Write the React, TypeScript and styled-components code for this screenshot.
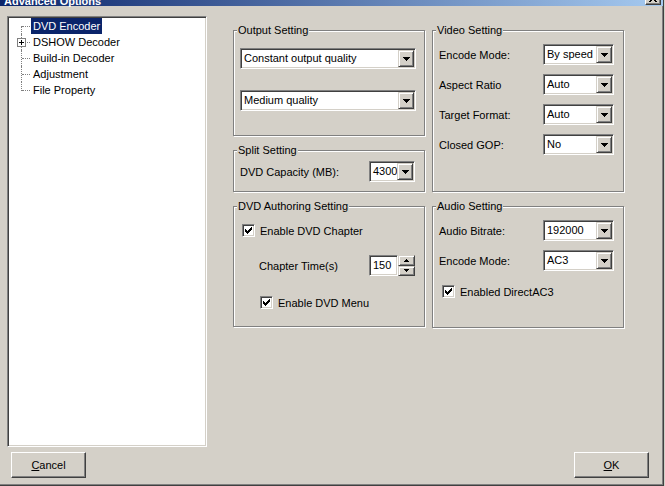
import React from "react"
import styled, { createGlobalStyle } from "styled-components"

const FONT = `"Liberation Sans", Arial, sans-serif`

const GlobalStyle = createGlobalStyle`
  html, body {
    margin: 0;
    padding: 0;
    background: #d4d0c8;
  }
  * {
    box-sizing: border-box;
  }
  body {
    font-family: ${FONT};
    font-size: 11px;
    color: #000;
  }
`

const Window = styled.div`
  width: 664px;
  height: 486px;
  overflow: hidden;
  background: #d4d0c8;
  display: flex;
  flex-direction: column;
  border-right: 1px solid #404040;
  border-bottom: 1px solid #404040;
  box-shadow: inset -1px -1px 0 #808080;
`

const TitleBar = styled.div`
  flex: none;
  height: 18px;
  margin-top: -12px;
  padding: 0 2px 0 4px;
  display: flex;
  align-items: flex-start;
  justify-content: space-between;
  background: linear-gradient(to right, #0a246a, #a6caf0);
`

const Title = styled.span`
  color: #fff;
  font-weight: bold;
  font-size: 11px;
  line-height: 11px;
  padding-top: 8px;
`

const CloseButton = styled.div`
  width: 16px;
  height: 14px;
  margin-top: 3px;
  background: #d4d0c8;
  border: 1px solid;
  border-color: #fff #404040 #404040 #fff;
  box-shadow: inset -1px -1px 0 #808080;
  display: flex;
  align-items: center;
  justify-content: center;
`

const Body = styled.div`
  flex: 1;
  display: flex;
  flex-direction: column;
  padding: 10px 0 0 7px;
`

const Main = styled.div`
  display: flex;
  align-items: flex-start;
  height: 431px;
`

const TreePanel = styled.div`
  flex: none;
  width: 200px;
  height: 431px;
  background: #fff;
  border: 1px solid;
  border-color: #808080 #fff #fff #808080;
  box-shadow: inset 1px 1px 0 #404040, inset -1px -1px 0 #d4d0c8;
  padding: 1px;
`

const TreeList = styled.ul`
  list-style: none;
  margin: 0;
  padding: 0;
`

const TreeItem = styled.li`
  display: flex;
  align-items: center;
  height: 16px;
`

const Gutter = styled.span<{ $first?: boolean; $last?: boolean }>`
  position: relative;
  flex: none;
  width: 22px;
  height: 100%;

  &::before {
    content: "";
    position: absolute;
    left: 12px;
    top: ${({ $first }) => ($first ? "8px" : "0")};
    bottom: ${({ $last }) => ($last ? "7px" : "0")};
    border-left: 1px dotted #808080;
  }

  &::after {
    content: "";
    position: absolute;
    left: 13px;
    top: 8px;
    width: 8px;
    border-top: 1px dotted #808080;
  }
`

const Expander = styled.span`
  position: absolute;
  left: 8px;
  top: 4px;
  width: 9px;
  height: 9px;
  z-index: 1;
  background: #fff;
  border: 1px solid #808080;
  display: flex;
  align-items: center;
  justify-content: center;
`

const NodeLabel = styled.span<{ $selected?: boolean }>`
  height: 16px;
  line-height: 16px;
  padding: 0 2px;
  white-space: nowrap;
  background: ${({ $selected }) => ($selected ? "#0a246a" : "transparent")};
  color: ${({ $selected }) => ($selected ? "#fff" : "#000")};
`

const Content = styled.div`
  display: flex;
  gap: 7px;
  margin: 14px 0 0 26px;
`

const Column = styled.div`
  width: 192px;
  display: flex;
  flex-direction: column;
  gap: 14px;
`

const Group = styled.div<{ $h: number; $pt: number; $pl?: number }>`
  position: relative;
  height: ${({ $h }) => $h}px;
  border: 1px solid #808080;
  box-shadow: inset 1px 1px 0 #fff, 1px 1px 0 #fff;
  padding: ${({ $pt, $pl = 6 }) => `${$pt}px 9px 0 ${$pl}px`};
  display: flex;
  flex-direction: column;
`

const Legend = styled.span`
  position: absolute;
  top: -7px;
  left: 3px;
  padding: 0 1px;
  line-height: 13px;
  background: #d4d0c8;
  white-space: nowrap;
`

const Stack = styled.div<{ $gap: number }>`
  display: flex;
  flex-direction: column;
  gap: ${({ $gap }) => $gap}px;
`

const FieldRow = styled.div<{ $mt?: number; $indent?: number }>`
  display: flex;
  align-items: center;
  justify-content: space-between;
  height: 21px;
  margin-top: ${({ $mt = 0 }) => $mt}px;
  padding-left: ${({ $indent = 0 }) => $indent}px;
`

const FieldLabel = styled.span`
  white-space: nowrap;
`

const Sunken = styled.div`
  background: #fff;
  border: 1px solid;
  border-color: #808080 #fff #fff #808080;
  box-shadow: inset 1px 1px 0 #404040, inset -1px -1px 0 #d4d0c8;
`

const ComboBox = styled(Sunken)<{ $w: number }>`
  width: ${({ $w }) => $w}px;
  height: 21px;
  padding: 1px;
  display: flex;
  align-items: stretch;
  flex: none;
`

const ComboText = styled.span`
  flex: 1;
  padding-left: 2px;
  line-height: 17px;
  white-space: nowrap;
  overflow: hidden;
`

const Raised = styled.div`
  background: #d4d0c8;
  border: 1px solid;
  border-color: #d4d0c8 #404040 #404040 #d4d0c8;
  box-shadow: inset 1px 1px 0 #fff, inset -1px -1px 0 #808080;
  display: flex;
  align-items: center;
  justify-content: center;
`

const DropButton = styled(Raised)`
  width: 16px;
  flex: none;
`

const SpinBox = styled.div`
  display: flex;
  height: 21px;
`

const SpinField = styled(Sunken)`
  width: 29px;
  height: 21px;
  padding: 0 0 0 3px;
  line-height: 19px;
`

const SpinColumn = styled.div`
  width: 17px;
  display: flex;
  flex-direction: column;
`

const SpinButton = styled(Raised)`
  flex: 1;
`

const CheckRow = styled.label<{ $mt?: number; $indent?: number }>`
  display: flex;
  align-items: center;
  gap: 5px;
  height: 13px;
  margin-top: ${({ $mt = 0 }) => $mt}px;
  margin-left: ${({ $indent = 0 }) => $indent}px;
  white-space: nowrap;
`

const CheckBox = styled(Sunken)`
  width: 13px;
  height: 13px;
  flex: none;
  padding: 2px 0 0 2px;
  display: flex;
`

const Footer = styled.div`
  display: flex;
  justify-content: space-between;
  margin-top: 5px;
  padding: 0 14px 0 4px;
`

const PushButton = styled(Raised)`
  width: 75px;
  height: 26px;
  border-color: #fff #404040 #404040 #fff;
  box-shadow: inset -1px -1px 0 #808080;
`

const Mnemonic = styled.span`
  text-decoration: underline;
`

const DownArrow = () => (
  <svg width="7" height="4" shapeRendering="crispEdges">
    <path d="M0 0h7v1H0z M1 1h5v1H1z M2 2h3v1H2z M3 3h1v1H3z" fill="#000" />
  </svg>
)

const SmallArrow = ({ up }: { up?: boolean }) => (
  <svg width="5" height="3" shapeRendering="crispEdges" style={up ? undefined : { transform: "scaleY(-1)" }}>
    <path d="M2 0h1v1H2z M1 1h3v1H1z M0 2h5v1H0z" fill="#000" />
  </svg>
)

const CheckMark = () => (
  <svg width="7" height="7" shapeRendering="crispEdges">
    <path
      d="M6 0h1v1H6z M5 1h2v1H5z M0 2h1v1H0z M4 2h3v1H4z M0 3h2v1H0z M3 3h3v1H3z M0 4h5v1H0z M1 5h3v1H1z M2 6h1v1H2z"
      fill="#000"
    />
  </svg>
)

const Combo = ({ value, w }: { value: string; w: number }) => (
  <ComboBox $w={w}>
    <ComboText>{value}</ComboText>
    <DropButton>
      <DownArrow />
    </DropButton>
  </ComboBox>
)

const Check = ({ label, mt, indent }: { label: string; mt?: number; indent?: number }) => (
  <CheckRow $mt={mt} $indent={indent}>
    <CheckBox>
      <CheckMark />
    </CheckBox>
    {label}
  </CheckRow>
)

const treeNodes = [
  { label: "DVD Encoder", selected: true },
  { label: "DSHOW Decoder", expandable: true },
  { label: "Build-in Decoder" },
  { label: "Adjustment" },
  { label: "File Property" },
]

const videoRows = [
  ["Encode Mode:", "By speed"],
  ["Aspect Ratio", "Auto"],
  ["Target Format:", "Auto"],
  ["Closed GOP:", "No"],
]

export default function App() {
  return (
    <>
      <GlobalStyle />
      <Window>
        <TitleBar>
          <Title>Advanced Options</Title>
          <CloseButton>
            <svg width="8" height="7" shapeRendering="crispEdges">
              <path d="M0 0h2v1H0z M6 0h2v1H6z M1 1h2v1H1z M5 1h2v1H5z M2 2h4v1H2z M3 3h2v1H3z M2 4h4v1H2z M1 5h2v1H1z M5 5h2v1H5z M0 6h2v1H0z M6 6h2v1H6z" fill="#000" />
            </svg>
          </CloseButton>
        </TitleBar>

        <Body>
          <Main>
            <TreePanel>
              <TreeList>
                {treeNodes.map((node, i) => (
                  <TreeItem key={node.label}>
                    <Gutter $first={i === 0} $last={i === treeNodes.length - 1}>
                      {node.expandable && (
                        <Expander>
                          <svg width="5" height="5" shapeRendering="crispEdges">
                            <path d="M0 2h5v1H0z M2 0h1v5H2z" fill="#000" />
                          </svg>
                        </Expander>
                      )}
                    </Gutter>
                    <NodeLabel $selected={node.selected}>{node.label}</NodeLabel>
                  </TreeItem>
                ))}
              </TreeList>
            </TreePanel>

            <Content>
              <Column>
                <Group $h={106} $pt={17}>
                  <Legend>Output Setting</Legend>
                  <Stack $gap={21}>
                    <Combo value="Constant output quality" w={176} />
                    <Combo value="Medium quality" w={176} />
                  </Stack>
                </Group>

                <Group $h={42} $pt={10}>
                  <Legend>Split Setting</Legend>
                  <FieldRow>
                    <FieldLabel>DVD Capacity (MB):</FieldLabel>
                    <Combo value="4300" w={46} />
                  </FieldRow>
                </Group>

                <Group $h={121} $pt={17} $pl={8}>
                  <Legend>DVD Authoring Setting</Legend>
                  <Check label="Enable DVD Chapter" />
                  <FieldRow $mt={18} $indent={17}>
                    <FieldLabel>Chapter Time(s)</FieldLabel>
                    <SpinBox>
                      <SpinField>150</SpinField>
                      <SpinColumn>
                        <SpinButton>
                          <SmallArrow up />
                        </SpinButton>
                        <SpinButton>
                          <SmallArrow />
                        </SpinButton>
                      </SpinColumn>
                    </SpinBox>
                  </FieldRow>
                  <Check label="Enable DVD Menu" mt={20} indent={18} />
                </Group>
              </Column>

              <Column>
                <Group $h={162} $pt={13}>
                  <Legend>Video Setting</Legend>
                  <Stack $gap={9}>
                    {videoRows.map(([label, value]) => (
                      <FieldRow key={label}>
                        <FieldLabel>{label}</FieldLabel>
                        <Combo value={value} w={71} />
                      </FieldRow>
                    ))}
                  </Stack>
                </Group>

                <Group $h={122} $pt={13}>
                  <Legend>Audio Setting</Legend>
                  <Stack $gap={9}>
                    <FieldRow>
                      <FieldLabel>Audio Bitrate:</FieldLabel>
                      <Combo value="192000" w={71} />
                    </FieldRow>
                    <FieldRow>
                      <FieldLabel>Encode Mode:</FieldLabel>
                      <Combo value="AC3" w={71} />
                    </FieldRow>
                  </Stack>
                  <Check label="Enabled DirectAC3" mt={14} indent={3} />
                </Group>
              </Column>
            </Content>
          </Main>

          <Footer>
            <PushButton>
              <span>
                <Mnemonic>C</Mnemonic>ancel
              </span>
            </PushButton>
            <PushButton>
              <span>
                <Mnemonic>O</Mnemonic>K
              </span>
            </PushButton>
          </Footer>
        </Body>
      </Window>
    </>
  )
}
